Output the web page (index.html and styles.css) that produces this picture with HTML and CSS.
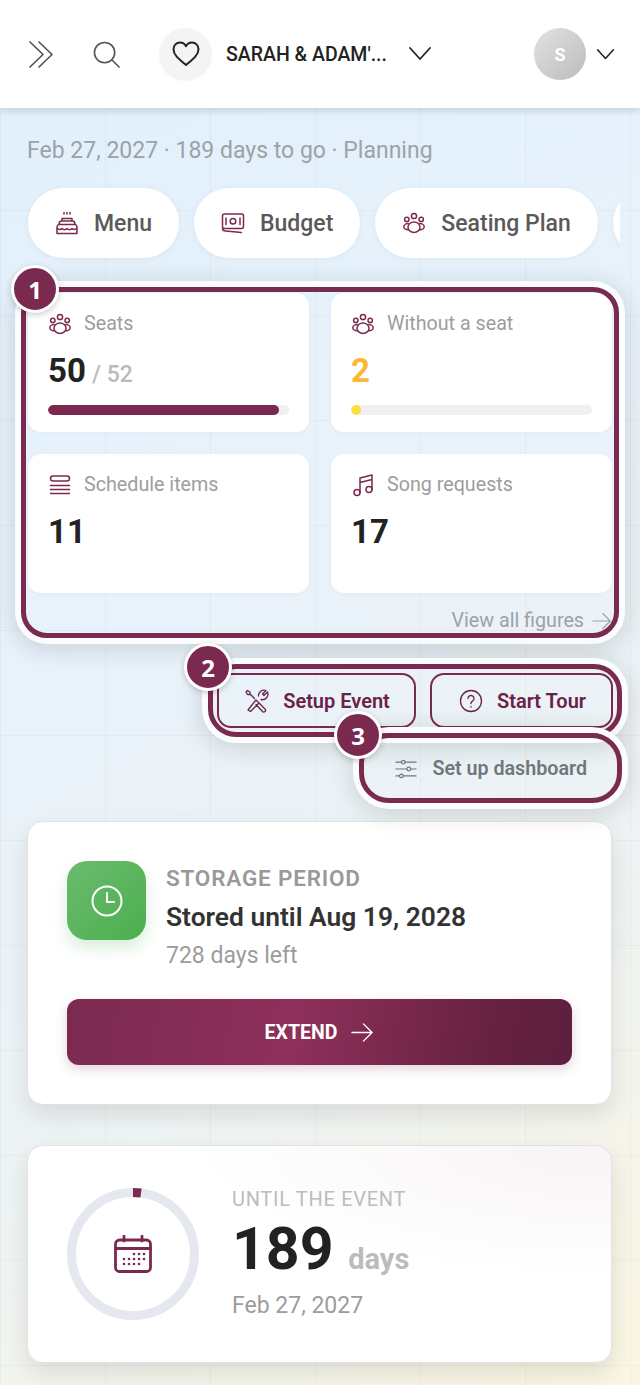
FILE: index.html
```html
<!DOCTYPE html>
<html lang="en">
<head>
  <meta charset="UTF-8">
  <title>Dashboard</title>
  <meta name="viewport" content="width=device-width, initial-scale=1">
  <link rel="stylesheet" href="styles.css">
</head>
<body>
  <svg class="icon-defs" aria-hidden="true">
    <symbol id="i-people" viewBox="0 0 24 24">
      <circle cx="12" cy="5" r="2.6"/>
      <circle cx="4.8" cy="8.4" r="2.2"/>
      <circle cx="19.2" cy="8.4" r="2.2"/>
      <ellipse cx="12" cy="16.2" rx="6" ry="5.2"/>
      <path d="M6.2 12.6c-2.4 0-4.4 1.5-4.4 3.2s2 3 4.4 3M17.8 12.6c2.4 0 4.4 1.5 4.4 3.2s-2 3-4.4 3"/>
    </symbol>
    <symbol id="i-chev" viewBox="0 0 24 24">
      <path d="M2 6l10 11L22 6"/>
    </symbol>
    <symbol id="i-arrow" viewBox="0 0 24 24">
      <path d="M1 12h21M13 3l9 9-9 9"/>
    </symbol>
  </svg>

  <header class="topbar">
    <svg class="top-icon chevrons" viewBox="0 0 27 27"><path d="M2 1l13 12.500L2 26M11 1l13 12.500L11 26"/></svg>
    <svg class="top-icon search" viewBox="0 0 28 28"><circle cx="12" cy="12" r="10.500"/><path d="M20 20l7 7"/></svg>
    <div class="event-icon">
      <svg viewBox="0 0 28 28"><path d="M14 25C8 20 1.500 15.500 1.500 9.200 1.500 5.200 4.500 2.500 8 2.500c2.600 0 4.800 1.400 6 3.700 1.200-2.300 3.400-3.700 6-3.700 3.500 0 6.500 2.700 6.500 6.700C26.500 15.500 20 20 14 25z"/></svg>
    </div>
    <div class="event-name">SARAH &amp; ADAM'...</div>
    <svg class="chev chev-lg"><use href="#i-chev"/></svg>
    <div class="avatar">S</div>
    <svg class="chev chev-sm"><use href="#i-chev"/></svg>
  </header>

  <main class="content">
    <p class="event-meta">Feb 27, 2027 · 189 days to go · Planning</p>

    <nav class="pills">
      <a class="pill">
        <svg class="pill-icon" viewBox="0 0 24 24"><path d="M9 1.500v1.500M12 1.500v1.500M15 1.500v1.500M7 10V7.500h10V10M4 13.500c0-2 1-3.500 2.500-3.500h11c1.500 0 2.500 1.500 2.500 3.500M2 22.500v-6c0-1.500 1-3 2-3h16c1 0 2 1.500 2 3v6zM2 17c2 2 3.500 2 5 .5 1.500 1.500 3.500 1.500 5 0 1.500 1.500 3.500 1.500 5 0 1.500 1.500 3 1.500 5-.5"/></svg>
        Menu
      </a>
      <a class="pill">
        <svg class="pill-icon" viewBox="0 0 24 24"><rect x="1.500" y="3" width="21" height="14.500" rx="2"/><circle cx="12" cy="10.200" r="2.800"/><path d="M5 7v6.500M19 7v6.500M1.500 17.500c0 2 1 2.500 3 2.500l16 1.500"/></svg>
        Budget
      </a>
      <a class="pill">
        <svg class="pill-icon people"><use href="#i-people"/></svg>
        Seating Plan
      </a>
      <a class="pill pill-next"></a>
    </nav>

    <section class="figures">
      <div class="stat-grid">
        <div class="stat-card">
          <div class="stat-label"><svg class="stat-icon"><use href="#i-people"/></svg>Seats</div>
          <div class="stat-value">50 <span class="stat-of">/ 52</span></div>
          <div class="bar"><div class="bar-fill" style="width: 96%"></div></div>
        </div>
        <div class="stat-card">
          <div class="stat-label"><svg class="stat-icon"><use href="#i-people"/></svg>Without a seat</div>
          <div class="stat-value warn">2</div>
          <div class="bar"><div class="bar-fill yellow" style="width: 4%"></div></div>
        </div>
        <div class="stat-card">
          <div class="stat-label">
            <svg class="stat-icon" viewBox="0 0 24 24"><rect x="2.500" y="3" width="19" height="5" rx="2.500"/><path d="M2.500 12.500h19M2.500 16.500h19M2.500 20.500h19"/></svg>
            Schedule items
          </div>
          <div class="stat-value">11</div>
        </div>
        <div class="stat-card">
          <div class="stat-label">
            <svg class="stat-icon" viewBox="0 0 24 24"><circle cx="6" cy="19.500" r="3"/><circle cx="18" cy="16.500" r="3"/><path d="M9 19.500V5l12-3v14.500M9 9.500l12-3"/></svg>
            Song requests
          </div>
          <div class="stat-value">17</div>
        </div>
      </div>
      <a class="view-all">View all figures <svg class="view-arrow"><use href="#i-arrow"/></svg></a>
      <div class="spot"></div>
      <span class="badge badge-1">1</span>
    </section>

    <section class="actions">
      <div class="action-row">
        <a class="action-btn setup">
          <svg class="action-icon" viewBox="0 0 24 24"><path d="M3 21l2.500 1.500L14 14l-3-3zM9.500 9.500L5 5V3L2.500 1.500 1 3l1.500 2.500H5M13.500 7a5.500 5.500 0 0 1 7.500-5.500L17.500 5l1.500 1.500 3.500-3.500A5.500 5.500 0 0 1 16 10.500M13 13l7.500 7.500a2 2 0 0 1-2.500 2.500L11 15.500"/></svg>
          Setup Event
        </a>
        <a class="action-btn tour">
          <svg class="action-icon" viewBox="0 0 24 24"><circle cx="12" cy="12" r="10.500"/><path d="M9 9.500a3 3 0 1 1 4.500 2.600c-1 .6-1.500 1.200-1.500 2.400M12 17.500v.5"/></svg>
          Start Tour
        </a>
        <div class="spot spot-row"></div>
        <span class="badge badge-2">2</span>
      </div>
      <div class="dash-wrap">
        <a class="dash-btn">
          <svg class="action-icon dash-icon" viewBox="0 0 24 24"><path d="M1 4.500h6M11 4.500h12M1 12h12M17 12h6M1 19.500h4M9 19.500h14"/><circle cx="9" cy="4.500" r="2"/><circle cx="15" cy="12" r="2"/><circle cx="7" cy="19.500" r="2"/></svg>
          Set up dashboard
        </a>
        <div class="spot spot-dash"></div>
        <span class="badge badge-3">3</span>
      </div>
    </section>

    <section class="panel storage">
      <div class="storage-top">
        <div class="storage-tile">
          <svg viewBox="0 0 32 32"><circle cx="16" cy="16" r="14.500"/><path d="M16 8v9h7"/></svg>
        </div>
        <div class="storage-text">
          <div class="storage-label">STORAGE PERIOD</div>
          <div class="storage-date">Stored until Aug 19, 2028</div>
          <div class="storage-left">728 days left</div>
        </div>
      </div>
      <a class="extend-btn">EXTEND <svg class="extend-arrow"><use href="#i-arrow"/></svg></a>
    </section>

    <section class="panel countdown">
      <div class="ring">
        <svg class="ring-svg" viewBox="0 0 132 132">
          <circle class="ring-track" cx="66" cy="66" r="61.500"/>
          <circle class="ring-value" cx="66" cy="66" r="61.500" pathLength="100" stroke-dasharray="2.100 100"/>
        </svg>
        <svg class="ring-icon" viewBox="0 0 38 38">
          <rect x="1.500" y="5" width="35" height="31.500" rx="4"/>
          <path d="M1.500 13.500h35M10 1v5M28 1v5"/>
          <g class="cal-dots">
            <circle cx="20" cy="19" r="1.300"/><circle cx="25" cy="19" r="1.300"/><circle cx="30" cy="19" r="1.300"/>
            <circle cx="10" cy="24" r="1.300"/><circle cx="15" cy="24" r="1.300"/><circle cx="20" cy="24" r="1.300"/><circle cx="25" cy="24" r="1.300"/><circle cx="30" cy="24" r="1.300"/>
            <circle cx="10" cy="29" r="1.300"/><circle cx="15" cy="29" r="1.300"/><circle cx="20" cy="29" r="1.300"/><circle cx="25" cy="29" r="1.300"/>
          </g>
        </svg>
      </div>
      <div class="countdown-text">
        <div class="countdown-label">UNTIL THE EVENT</div>
        <div class="countdown-days">189 <span class="countdown-unit">days</span></div>
        <div class="countdown-date">Feb 27, 2027</div>
      </div>
    </section>
  </main>
</body>
</html>
```

FILE: styles.css
```css
* {
  box-sizing: border-box;
}
html, body {
  height: 100%;
}
body {
  margin: 0;
  height: 100vh;
  overflow: hidden;
  font-family: Roboto, "Liberation Sans", sans-serif;
  color: #222;
  background:
    linear-gradient(rgba(0, 0, 0, 0.03) 1px, transparent 1px) 0 0 / 105px 105px,
    linear-gradient(90deg, rgba(0, 0, 0, 0.03) 1px, transparent 1px) 0 0 / 105px 105px,
    linear-gradient(150deg, #e0f0fc 0%, #e8f2fb 38%, #eef3f3 70%, #fbf6e2 100%);
}
a {
  text-decoration: none;
}
svg {
  fill: none;
  stroke: currentColor;
  stroke-linecap: round;
  stroke-linejoin: round;
}
.icon-defs {
  display: none;
}

/* top bar */
.topbar {
  height: 108px;
  background: #fff;
  box-shadow: 0 2px 8px rgba(0, 0, 0, 0.16);
  display: flex;
  align-items: center;
  padding: 0 25px 0 28px;
  color: #222;
}
.top-icon {
  width: 27px;
  height: 27px;
  stroke-width: 1.700;
}
.chevrons {
  color: #555;
}
.search {
  color: #555;
  margin-left: 38px;
}
.event-icon {
  width: 53px;
  height: 53px;
  border-radius: 50%;
  background: #f4f4f4;
  margin-left: 39px;
  display: flex;
  align-items: center;
  justify-content: center;
}
.event-icon svg {
  width: 28px;
  height: 28px;
  stroke-width: 2;
}
.event-name {
  font-size: 19.500px;
  font-weight: 500;
  margin-left: 14px;
  white-space: nowrap;
}
.chev {
  stroke-width: 2;
}
.chev-lg {
  width: 24px;
  height: 24px;
  margin-left: 21px;
  stroke-width: 1.800;
}
.chev-sm {
  width: 19px;
  height: 19px;
  margin-left: 10px;
  stroke-width: 2;
}
.avatar {
  width: 52px;
  height: 52px;
  border-radius: 50%;
  margin-left: auto;
  background: linear-gradient(135deg, #e2e2e2, #bcbcbc);
  color: #fff;
  font-size: 18px;
  font-weight: 700;
  display: flex;
  align-items: center;
  justify-content: center;
}

/* main column */
.content {
  padding: 0 27px;
}
.event-meta {
  margin: 28px 0 0;
  font-size: 23px;
  line-height: 30px;
  color: #9ba2a8;
}

/* shortcut pills */
.pills {
  display: flex;
  gap: 15px;
  margin: 7px -7px 0 -10px;
  padding: 15px 0 20px 11px;
  overflow: hidden;
}
.pill {
  flex: none;
  height: 70px;
  padding: 0 27px;
  border-radius: 35px;
  background: #fff;
  box-shadow: 0 1px 6px rgba(0, 0, 0, 0.05);
  display: flex;
  align-items: center;
  gap: 15px;
  font-size: 23px;
  font-weight: 500;
  color: #5a5a5a;
}
.pill-next {
  width: 120px;
}
.pill-icon {
  width: 24px;
  height: 24px;
  stroke-width: 1.500;
  color: #7b2a4f;
}

/* figures */
.figures {
  position: relative;
  margin-top: 15px;
  height: 339px;
  padding: 0 1px;
}
.stat-grid {
  display: grid;
  grid-template-columns: 1fr 1fr;
  grid-auto-rows: 139px;
  gap: 22px;
}
.stat-card {
  background: #fff;
  border-radius: 13px;
  padding: 19px 20px;
  box-shadow: 0 1px 4px rgba(0, 0, 0, 0.03);
}
.stat-label {
  display: flex;
  align-items: center;
  gap: 12px;
  font-size: 19.700px;
  line-height: 24px;
  color: #9d9d9d;
}
.stat-icon {
  width: 24px;
  height: 24px;
  stroke-width: 1.500;
  color: #7b2a4f;
}
.stat-value {
  margin-top: 11px;
  height: 48px;
  font-size: 33px;
  line-height: 48px;
  font-weight: 700;
  color: #222;
}
.stat-value.warn {
  color: #f9b934;
}
.stat-of {
  margin-left: -2px;
  font-size: 23px;
  font-weight: 500;
  color: #bbb;
}
.bar {
  height: 10px;
  margin-top: 10px;
  border-radius: 5px;
  background: #f0f0f0;
  overflow: hidden;
}
.bar-fill {
  height: 100%;
  border-radius: 5px;
  background: #7b2a4f;
}
.bar-fill.yellow {
  background: #fde13a;
}
.view-all {
  display: flex;
  align-items: center;
  justify-content: flex-end;
  gap: 8px;
  margin-top: 16px;
  font-size: 19.700px;
  line-height: 24px;
  color: #9ba2a8;
}
.view-arrow {
  width: 20px;
  height: 20px;
  stroke-width: 1.400;
}

/* tour highlight and step number */
.spot {
  position: absolute;
  inset: -6px;
  border: 5px solid #7b2a4f;
  border-radius: 26px;
  box-shadow: 0 0 0 6px #fbfcfe, 0 4px 24px 8px rgba(0, 0, 0, 0.13);
  pointer-events: none;
}
.badge {
  position: absolute;
  width: 48px;
  height: 48px;
  border-radius: 50%;
  border: 3px solid #fff;
  background: #7b2a4f;
  color: #fff;
  font-family: "Open Sans", Roboto, sans-serif;
  font-size: 24px;
  font-weight: 700;
  display: flex;
  align-items: center;
  justify-content: center;
  box-shadow: 0 2px 6px rgba(0, 0, 0, 0.2);
}
.badge-1 {
  left: -16px;
  top: -28px;
}
.badge-2 {
  left: -33px;
  top: -30px;
}
.badge-3 {
  left: -27px;
  top: -29px;
}

/* action buttons */
.actions {
  display: flex;
  flex-direction: column;
  align-items: flex-end;
  margin-top: 41px;
}
.action-row {
  position: relative;
  display: flex;
  gap: 14px;
}
.action-btn {
  height: 55px;
  border: 2px solid #7b2a4f;
  border-radius: 14px;
  display: flex;
  align-items: center;
  justify-content: center;
  gap: 14px;
  padding-left: 2px;
  font-size: 20px;
  font-weight: 600;
  color: #6b2148;
}
.setup {
  width: 199px;
}
.tour {
  width: 183px;
}
.action-icon {
  width: 24px;
  height: 24px;
  stroke-width: 1.300;
  flex: none;
}
.spot-row {
  inset: -9px -9px -9px -9px;
  border-radius: 28px;
}
.dash-wrap {
  position: relative;
  margin-top: 12px;
}
.dash-btn {
  width: 252px;
  height: 55px;
  display: flex;
  align-items: center;
  justify-content: flex-end;
  gap: 15px;
  padding: 2px 26px 0 0;
  font-size: 19.700px;
  font-weight: 600;
  color: #70777c;
}
.dash-icon {
  width: 22px;
  height: 22px;
}
.spot-dash {
  inset: -7px -9px -8px -2px;
  border-radius: 30px;
}

/* panels */
.panel {
  background: #fff;
  border: 1px solid #e2e2e2;
  border-radius: 16px;
  margin-right: 1px;
  box-shadow: 0 10px 24px rgba(0, 0, 0, 0.1);
}
.storage {
  margin-top: 26px;
  height: 284px;
  padding: 39px 39px 0;
}
.storage-top {
  display: flex;
  gap: 20px;
}
.storage-tile {
  width: 79px;
  height: 79px;
  border-radius: 20px;
  background: linear-gradient(135deg, #6abb6d, #4caf50);
  box-shadow: 0 8px 16px rgba(76, 175, 80, 0.22);
  display: flex;
  align-items: center;
  justify-content: center;
  color: #fff;
}
.storage-tile svg {
  width: 32px;
  height: 32px;
  stroke-width: 2;
}
.storage-text {
  margin-top: -2px;
  line-height: 38.500px;
}
.storage-label {
  font-size: 22.500px;
  font-weight: 600;
  letter-spacing: 0.800px;
  color: #999;
}
.storage-date {
  font-size: 26.400px;
  font-weight: 600;
  color: #333;
}
.storage-left {
  padding-top: 1px;
  font-size: 23px;
  color: #9c9c9c;
}
.extend-btn {
  height: 66px;
  margin-top: 23px;
  padding-top: 2px;
  border-radius: 12px;
  background: linear-gradient(100deg, #7b2a4f 0%, #8e305b 45%, #65213f 85%, #5d1f3e 100%);
  box-shadow: 0 4px 12px rgba(107, 33, 72, 0.2);
  display: flex;
  align-items: center;
  justify-content: center;
  gap: 14px;
  color: #fff;
  font-size: 19.500px;
  font-weight: 700;
}
.extend-arrow {
  width: 23px;
  height: 23px;
  stroke-width: 1.400;
}

/* countdown */
.countdown {
  margin-top: 40px;
  height: 218px;
  padding: 0 39px;
  display: flex;
  align-items: center;
  gap: 33px;
  background: radial-gradient(ellipse 420px 130px at 100% 0, #f7f3f6 0%, #fff 100%);
}
.ring {
  position: relative;
  width: 132px;
  height: 132px;
  flex: none;
  display: flex;
  align-items: center;
  justify-content: center;
}
.ring-svg {
  position: absolute;
  inset: 0;
  transform: rotate(-90deg);
}
.ring-track {
  stroke: #e5e8ee;
  stroke-width: 9;
}
.ring-value {
  stroke: #7b2a4f;
  stroke-width: 9;
  stroke-linecap: butt;
}
.ring-icon {
  position: relative;
  width: 38px;
  height: 38px;
  color: #7b2a4f;
  stroke-width: 2.800;
}
.cal-dots {
  fill: currentColor;
  stroke: none;
}
.countdown-label {
  font-size: 20px;
  line-height: 24px;
  letter-spacing: 0.700px;
  color: #bcbcbc;
}
.countdown-days {
  font-size: 59px;
  line-height: 68px;
  font-weight: 700;
  margin-top: 4px;
  color: #222;
}
.countdown-unit {
  font-size: 29px;
  color: #bbb;
}
.countdown-date {
  font-size: 23px;
  line-height: 30px;
  margin-top: -2px;
  color: #9c9c9c;
}
```
